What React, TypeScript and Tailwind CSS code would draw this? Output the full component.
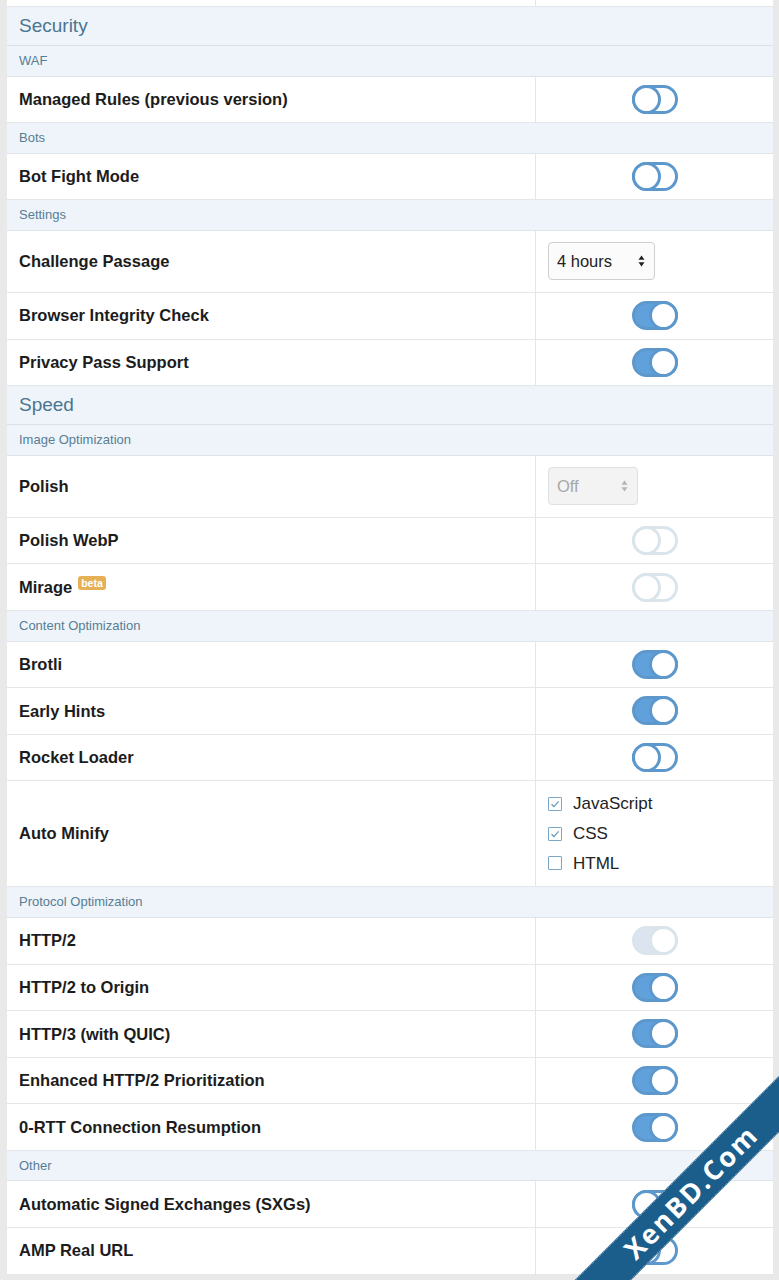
import React from 'react';

type Ctl =
  | { type: 'toggle'; on: boolean; disabled?: boolean }
  | { type: 'select'; value: string; width: string; disabled?: boolean }
  | { type: 'checks'; items: { label: string; checked: boolean }[] };

type Item =
  | { kind: 'section'; title: string }
  | { kind: 'sub'; title: string }
  | { kind: 'row'; label: string; beta?: boolean; ctl: Ctl; tall?: boolean };

const items: Item[] = [
  { kind: 'section', title: 'Security' },
  { kind: 'sub', title: 'WAF' },
  { kind: 'row', label: 'Managed Rules (previous version)', ctl: { type: 'toggle', on: false } },
  { kind: 'sub', title: 'Bots' },
  { kind: 'row', label: 'Bot Fight Mode', ctl: { type: 'toggle', on: false } },
  { kind: 'sub', title: 'Settings' },
  { kind: 'row', label: 'Challenge Passage', tall: true, ctl: { type: 'select', value: '4 hours', width: 'w-[107px]' } },
  { kind: 'row', label: 'Browser Integrity Check', ctl: { type: 'toggle', on: true } },
  { kind: 'row', label: 'Privacy Pass Support', ctl: { type: 'toggle', on: true } },
  { kind: 'section', title: 'Speed' },
  { kind: 'sub', title: 'Image Optimization' },
  { kind: 'row', label: 'Polish', tall: true, ctl: { type: 'select', value: 'Off', width: 'w-[90px]', disabled: true } },
  { kind: 'row', label: 'Polish WebP', ctl: { type: 'toggle', on: false, disabled: true } },
  { kind: 'row', label: 'Mirage', beta: true, ctl: { type: 'toggle', on: false, disabled: true } },
  { kind: 'sub', title: 'Content Optimization' },
  { kind: 'row', label: 'Brotli', ctl: { type: 'toggle', on: true } },
  { kind: 'row', label: 'Early Hints', ctl: { type: 'toggle', on: true } },
  { kind: 'row', label: 'Rocket Loader', ctl: { type: 'toggle', on: false } },
  {
    kind: 'row',
    label: 'Auto Minify',
    ctl: {
      type: 'checks',
      items: [
        { label: 'JavaScript', checked: true },
        { label: 'CSS', checked: true },
        { label: 'HTML', checked: false },
      ],
    },
  },
  { kind: 'sub', title: 'Protocol Optimization' },
  { kind: 'row', label: 'HTTP/2', ctl: { type: 'toggle', on: true, disabled: true } },
  { kind: 'row', label: 'HTTP/2 to Origin', ctl: { type: 'toggle', on: true } },
  { kind: 'row', label: 'HTTP/3 (with QUIC)', ctl: { type: 'toggle', on: true } },
  { kind: 'row', label: 'Enhanced HTTP/2 Prioritization', ctl: { type: 'toggle', on: true } },
  { kind: 'row', label: '0-RTT Connection Resumption', ctl: { type: 'toggle', on: true } },
  { kind: 'sub', title: 'Other' },
  { kind: 'row', label: 'Automatic Signed Exchanges (SXGs)', ctl: { type: 'toggle', on: false } },
  { kind: 'row', label: 'AMP Real URL', ctl: { type: 'toggle', on: false } },
];

const Toggle = ({ on, disabled }: { on: boolean; disabled?: boolean }) => (
  <div
    className={`flex items-center w-[46px] h-[29px] rounded-full border-[3px] border-[#5d98cd] ${
      on ? 'justify-end bg-[#60a0db]' : 'justify-start bg-white'
    } ${disabled ? 'opacity-25 grayscale-[40%]' : ''}`}
  >
    <div className="w-[29px] h-[29px] -m-[3px] rounded-full border-[3px] border-[#5d98cd] bg-white" />
  </div>
);

const Arrows = ({ color }: { color: string }) => (
  <svg width="7" height="12" viewBox="0 0 7 12">
    <path d="M3.5 0.5 L6.5 4.8 L0.5 4.8 Z" fill={color} />
    <path d="M3.5 11.5 L6.5 7.2 L0.5 7.2 Z" fill={color} />
  </svg>
);

const Select = ({ value, width, disabled }: { value: string; width: string; disabled?: boolean }) => (
  <div
    className={`${width} h-[38px] flex items-center justify-between pl-[8px] pr-[9px] rounded-[4px] border text-[16.5px] ${
      disabled
        ? 'bg-[#f3f3f3] border-[#e0e0e0] text-[#a8a8a8]'
        : 'bg-[#fbfbfb] border-[#cfcfcf] text-[#222]'
    }`}
  >
    <span>{value}</span>
    <Arrows color={disabled ? '#b5b5b5' : '#222'} />
  </div>
);

const Check = ({ checked }: { checked: boolean }) => (
  <div className="w-[14px] h-[14px] border border-[#7ba6c6] rounded-[1px] bg-white flex items-center justify-center">
    {checked && (
      <svg width="10" height="10" viewBox="0 0 10 10">
        <path d="M1.5 5.2 L4 7.6 L8.6 2.4" fill="none" stroke="#6b9cc0" strokeWidth="1.4" />
      </svg>
    )}
  </div>
);

const Control = ({ ctl }: { ctl: Ctl }) => {
  if (ctl.type === 'toggle') {
    return (
      <div className="flex-1 flex items-center justify-center">
        <Toggle on={ctl.on} disabled={ctl.disabled} />
      </div>
    );
  }
  if (ctl.type === 'select') {
    return (
      <div className="flex-1 flex items-center px-3">
        <Select value={ctl.value} width={ctl.width} disabled={ctl.disabled} />
      </div>
    );
  }
  return (
    <div className="flex-1 flex flex-col justify-center px-3 py-[8px]">
      {ctl.items.map((c) => (
        <div key={c.label} className="h-[30px] flex items-center gap-[11px] text-[17px] text-[#222]">
          <Check checked={c.checked} />
          <span>{c.label}</span>
        </div>
      ))}
    </div>
  );
};

export default function App() {
  return (
    <div className="relative h-[1280px] overflow-hidden bg-[#e9e9e9] pl-[7px] pr-[6px] font-['Liberation_Sans',Arial,sans-serif]">
      <div className="bg-white">
        <div className="flex h-[7px] border-b border-[#e2e7eb]">
          <div className="w-[529px] border-r border-[#e2e7eb]" />
        </div>
        {items.map((it, i) => {
          if (it.kind === 'section') {
            return (
              <div
                key={i}
                className="h-[39px] flex items-center px-3 bg-[#eef4fa] border-b border-[#d9e1e8] text-[19px] text-[#4b7590]"
              >
                {it.title}
              </div>
            );
          }
          if (it.kind === 'sub') {
            return (
              <div
                key={i}
                className="h-[30.6px] flex items-center px-3 bg-[#eef4fa] border-b border-[#dde4ea] text-[13px] text-[#587d95]"
              >
                {it.title}
              </div>
            );
          }
          const h = it.tall ? 'h-[62px]' : it.ctl.type === 'checks' ? 'h-[106px]' : 'h-[46.6px]';
          return (
            <div key={i} className={`flex ${h} border-b border-[#e2e7eb]`}>
              <div className="w-[529px] shrink-0 flex items-center px-3 border-r border-[#e2e7eb] text-[16.5px] font-bold text-[#1c1c1c]">
                <span>{it.label}</span>
                {it.beta && (
                  <span className="ml-[6px] -mt-[9px] px-[3px] h-[14px] leading-[14px] rounded-[3px] bg-[#e6b155] text-white text-[10.5px] font-bold">
                    beta
                  </span>
                )}
              </div>
              <Control ctl={it.ctl} />
            </div>
          );
        })}
      </div>

      <div className="absolute left-[441px] top-[1172px] w-[500px] h-[40px] -rotate-45 bg-[#1b5d8b] flex items-center justify-center border-y border-dotted border-[#9fb9cc]">
        <span className="text-white font-bold text-[27px] tracking-[2px] font-['Open_Sans',sans-serif]">XenBD.Com</span>
      </div>
    </div>
  );
}
